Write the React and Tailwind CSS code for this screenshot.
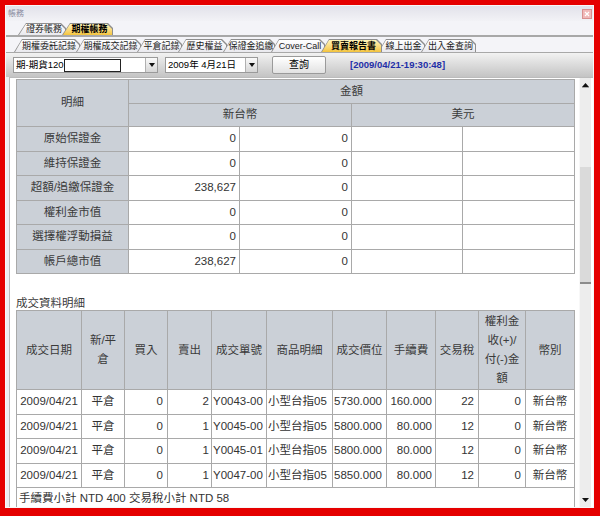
import React from 'react';

const FONT = "font-['Liberation_Sans','Noto_Sans_CJK_TC',sans-serif]";

function Tab({ label, active, w, first }) {
  return (
    <div
      className={`${first ? '' : '-ml-[4px]'} ${active ? 'relative z-10' : ''} h-full shrink-0 bg-[#8e8e8e] pt-[1px] px-[1px] [clip-path:polygon(8px_0,calc(100%_-_5px)_0,100%_5px,100%_100%,0_100%)]`}
      style={{ width: w }}
    >
      <div
        className={`h-full flex items-center justify-center pl-[6px] pr-[2px] text-[9px] leading-none whitespace-nowrap [clip-path:polygon(7px_0,calc(100%_-_5px)_0,100%_5px,100%_100%,0_100%)] ${
          active
            ? 'bg-gradient-to-b from-[#fff4b8] to-[#f4c43a] font-bold text-black'
            : 'bg-gradient-to-b from-white to-[#e9e9ee] text-[#222]'
        }`}
      >
        {label}
      </div>
    </div>
  );
}

const subTabs = [
  ['期權委託記錄', 66],
  ['期權成交記錄', 65],
  ['平倉記錄', 45],
  ['歷史權益', 49],
  ['保證金追繳', 52],
  ['Cover-Call', 54],
  ['買賣報告書', 61, true],
  ['線上出金', 47],
  ['出入金查詢', 55],
];

const summary = [
  ['原始保證金', '0', '0'],
  ['維持保證金', '0', '0'],
  ['超額/追繳保證金', '238,627', '0'],
  ['權利金市值', '0', '0'],
  ['選擇權浮動損益', '0', '0'],
  ['帳戶總市值', '238,627', '0'],
];

const trades = [
  ['2009/04/21', '平倉', '0', '2', 'Y0043-00', '小型台指05', '5730.000', '160.000', '22', '0', '新台幣'],
  ['2009/04/21', '平倉', '0', '1', 'Y0045-00', '小型台指05', '5800.000', '80.000', '12', '0', '新台幣'],
  ['2009/04/21', '平倉', '0', '1', 'Y0045-01', '小型台指05', '5800.000', '80.000', '12', '0', '新台幣'],
  ['2009/04/21', '平倉', '0', '1', 'Y0047-00', '小型台指05', '5850.000', '80.000', '12', '0', '新台幣'],
];

const tradeCols = [65, 43, 43, 44, 55, 66, 54, 49, 43, 47, 49];

function DropArrow() {
  return (
    <div className="w-[12px] h-full flex items-center justify-center bg-gradient-to-b from-[#fafafa] to-[#d6d6d6] border-l border-[#b0b0b0]">
      <svg width="6" height="4" viewBox="0 0 6 4">
        <path d="M0 0H6L3 4Z" fill="#111" />
      </svg>
    </div>
  );
}

export default function App() {
  const th = 'border border-[#a9a9a9] bg-[#cbd0d7] font-normal text-[#3a3a3a]';
  const td = 'border border-[#a9a9a9] bg-white text-[#333]';
  return (
    <div className={`w-[600px] h-[516px] bg-[#e50000] pt-[5px] pl-[5px] pr-[6px] pb-[8px] ${FONT}`}>
      <div className="h-full flex flex-col bg-[#eeeef3] border border-[#f8f8f8]">
        {/* title bar */}
        <div className="h-[15px] shrink-0 flex items-center justify-between pl-[2px] pr-[1px] bg-gradient-to-b from-[#e2e2ea] to-[#f2f2f6]">
          <span className="text-[8px] text-[#8a8aa0] leading-none">帳務</span>
          <div className="w-[10px] h-[10px] bg-[#f0b8b8] border border-[#d89090] flex items-center justify-center">
            <svg width="6" height="6" viewBox="0 0 6 6">
              <path d="M1 1L5 5M5 1L1 5" stroke="#fff" strokeWidth="1.2" />
            </svg>
          </div>
        </div>
        {/* top tabs */}
        <div className="h-[16px] shrink-0 flex items-end pl-[12px] pt-[2px] border-b-2 border-[#a8a8a8] bg-[#f4f4f8]">
          <Tab label="證券帳務" w={48} first />
          <Tab label="期權帳務" w={51} active />
        </div>
        {/* sub tabs */}
        <div className="h-[16px] shrink-0 flex items-end pl-[8px] pt-[2px] border-b border-[#a8a8a8] bg-[#f4f4f8]">
          {subTabs.map(([l, w, a], i) => (
            <Tab key={l} label={l} w={w} active={a} first={i === 0} />
          ))}
        </div>
        {/* toolbar */}
        <div className="h-[24px] shrink-0 flex items-center pl-[7px] bg-gradient-to-b from-[#f2f2f2] to-[#c4c4c4]">
          <div className="w-[145px] h-[16px] flex items-center bg-white border border-[#9a9a9a]">
            <span className="pl-[2px] text-[9.5px] text-black leading-none whitespace-nowrap">期-期貨120</span>
            <div className="w-[57px] h-[13px] border border-[#222] bg-white" />
            <div className="flex-1" />
            <DropArrow />
          </div>
          <div className="ml-[7px] w-[93px] h-[16px] flex items-center bg-white border border-[#9a9a9a]">
            <span className="pl-[2px] text-[9.5px] text-black leading-none whitespace-nowrap">2009年 4月21日</span>
            <div className="flex-1" />
            <DropArrow />
          </div>
          <div className="ml-[14px] w-[54px] h-[18px] flex items-center justify-center bg-gradient-to-b from-white to-[#e2e2e2] border border-[#9a9a9a] rounded-[2px] text-[10px] text-black leading-none">
            查詢
          </div>
          <span className="ml-[24px] text-[9.5px] font-bold text-[#1f2fa8] leading-none">[2009/04/21-19:30:48]</span>
        </div>
        {/* content */}
        <div className="flex-1 min-h-0 flex ml-[3px] pr-[2px] border-l border-t border-[#bcbcbc] bg-white">
          <div className="flex-1 min-w-0 overflow-hidden pl-[6px] pt-[1px]">
            <table className="w-[558px] table-fixed border-collapse text-[11.5px]">
              <colgroup>
                <col className="w-[112px]" />
                <col className="w-[111px]" />
                <col className="w-[112px]" />
                <col className="w-[111px]" />
                <col className="w-[112px]" />
              </colgroup>
              <thead>
                <tr className="h-[24px]">
                  <th rowSpan={2} className={th}>明細</th>
                  <th colSpan={4} className={th}>金額</th>
                </tr>
                <tr className="h-[23px]">
                  <th colSpan={2} className={th}>新台幣</th>
                  <th colSpan={2} className={th}>美元</th>
                </tr>
              </thead>
              <tbody>
                {summary.map(([a, b, c]) => (
                  <tr key={a} className="h-[24.5px]">
                    <td className={`${th} text-center`}>{a}</td>
                    <td className={`${td} text-right pr-[3px]`}>{b}</td>
                    <td className={`${td} text-right pr-[3px]`}>{c}</td>
                    <td className={td}></td>
                    <td className={td}></td>
                  </tr>
                ))}
              </tbody>
            </table>
            <div className="mt-[22px] h-[14px] text-[11.5px] leading-[14px] text-[#3a3a3a]">成交資料明細</div>
            <table className="w-[558px] table-fixed border-collapse text-[11.5px]">
              <colgroup>
                {tradeCols.map((w, i) => (
                  <col key={i} style={{ width: w }} />
                ))}
              </colgroup>
              <thead>
                <tr className="h-[79px] leading-[19px]">
                  <th className={th}>成交日期</th>
                  <th className={th}>新/平<br />倉</th>
                  <th className={th}>買入</th>
                  <th className={th}>賣出</th>
                  <th className={th}>成交單號</th>
                  <th className={th}>商品明細</th>
                  <th className={th}>成交價位</th>
                  <th className={th}>手續費</th>
                  <th className={th}>交易稅</th>
                  <th className={th}>權利金<br />收(+)/<br />付(-)金<br />額</th>
                  <th className={th}>幣別</th>
                </tr>
              </thead>
              <tbody>
                {trades.map((r, i) => (
                  <tr key={i} className="h-[24.5px]">
                    <td className={`${td} text-center`}>{r[0]}</td>
                    <td className={`${td} text-center`}>{r[1]}</td>
                    <td className={`${td} text-right pr-[4px]`}>{r[2]}</td>
                    <td className={`${td} text-right pr-[2px]`}>{r[3]}</td>
                    <td className={`${td} text-left pl-[1px]`}>{r[4]}</td>
                    <td className={`${td} text-left pl-[1px] whitespace-nowrap`}>{r[5]}</td>
                    <td className={`${td} text-left pl-[1px]`}>{r[6]}</td>
                    <td className={`${td} text-right pr-[3px]`}>{r[7]}</td>
                    <td className={`${td} text-right pr-[4px]`}>{r[8]}</td>
                    <td className={`${td} text-right pr-[4px]`}>{r[9]}</td>
                    <td className={`${td} text-center`}>{r[10]}</td>
                  </tr>
                ))}
                <tr className="h-[22px]">
                  <td colSpan={11} className={`${td} text-left pl-[2px]`}>手續費小計 NTD 400 交易稅小計 NTD 58</td>
                </tr>
              </tbody>
            </table>
          </div>
          {/* scrollbar */}
          <div className="w-[12px] shrink-0 flex flex-col bg-[#ededed] border-l border-[#f8f8f8]">
            <div className="h-[14px] flex items-center justify-center">
              <svg width="7" height="5" viewBox="0 0 7 5">
                <path d="M0 4H7L3.5 0Z" fill="#111" />
                <path d="M0 5H7" stroke="#666" strokeWidth="1" />
              </svg>
            </div>
            <div className="h-[75px]" />
            <div className="h-[117px] bg-[#dadada] border-b-2 border-[#8c8c8c]" />
            <div className="flex-1" />
            <div className="h-[14px] flex items-center justify-center">
              <svg width="7" height="4" viewBox="0 0 7 4">
                <path d="M0 0H7L3.5 4Z" fill="#111" />
              </svg>
            </div>
          </div>
        </div>
      </div>
    </div>
  );
}
